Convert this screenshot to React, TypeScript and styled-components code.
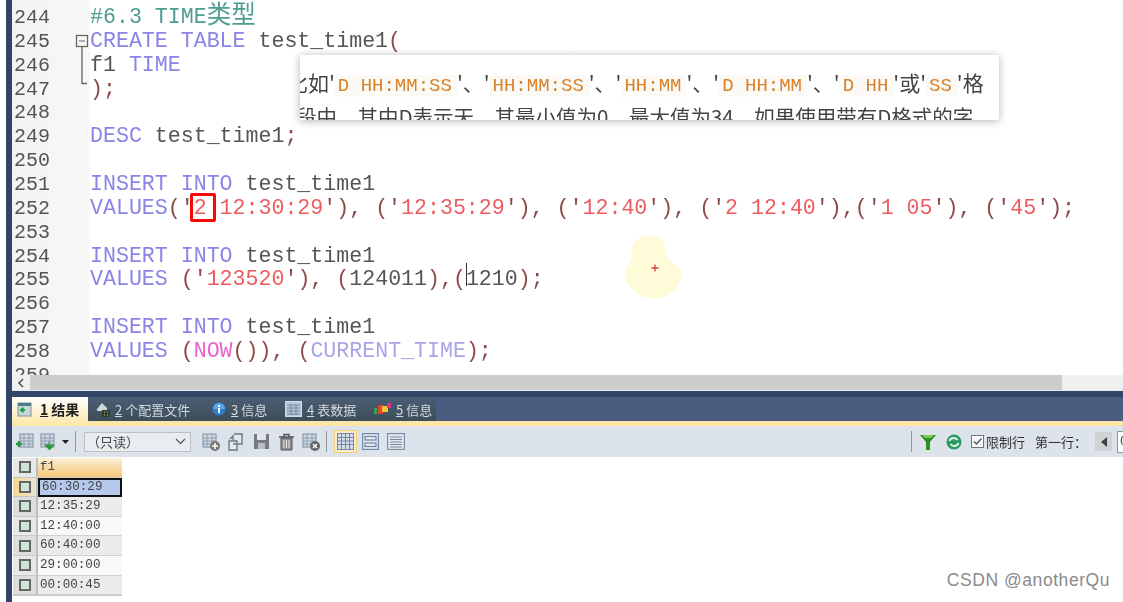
import { ReactNode } from "react";
import styled, { createGlobalStyle } from "styled-components";

const GlobalStyle = createGlobalStyle`
  html, body {
    margin: 0;
    padding: 0;
    background: #fff;
  }
`;

const Page = styled.div`
  position: relative;
  width: 1123px;
  height: 602px;
  overflow: hidden;
  background: #fff;
`;

const Screen = styled.div`
  display: flex;
  height: 100%;
  padding-left: 6px;
  box-sizing: border-box;
  filter: blur(0.45px);
`;

const Rail = styled.div`
  flex: 0 0 6px;
  background: #2f4468;
`;

const Main = styled.div`
  flex: 1;
  min-width: 0;
  display: flex;
  flex-direction: column;
`;

const Editor = styled.div`
  position: relative;
  flex: 0 0 369px;
  padding-top: 6px;
  display: flex;
  overflow: hidden;
  background: #fff;
`;

const Gutter = styled.div`
  flex: 0 0 78px;
  display: flex;
  margin-top: -6px;
  padding-top: 6px;
  background: linear-gradient(90deg, #f3f3f3, #f8f8f8);
`;

const LineNumbers = styled.div`
  flex: 0 0 61px;
  padding-left: 2px;
  font: 20px/23.86px "Liberation Mono", monospace;
  color: #555;
`;

const FoldColumn = styled.div`
  padding-top: 28px;
  svg {
    display: block;
  }
`;

const Code = styled.pre`
  margin: 0;
  font: 21.6px/23.86px "Liberation Mono", "Noto Sans CJK SC", monospace;
  color: #555;
`;

const Kw = styled.span`
  color: #8a84e6;
`;
const Cm = styled.span`
  color: #4f9c90;
`;
const CmWide = styled.span`
  font-size: 24.5px;
  line-height: 0;
`;
const Str = styled.span`
  color: #ee5b5f;
`;
const Pn = styled.span`
  color: #8a4a4a;
`;
const Fn = styled.span`
  color: #e664cf;
`;
const Var = styled.span`
  color: #aaa5e8;
`;

const Marked = styled.span`
  position: relative;
  &::after {
    content: "";
    position: absolute;
    left: -4px;
    top: -3px;
    width: 20px;
    height: 23px;
    border: 3px solid #f50a0a;
    border-radius: 2px;
  }
`;

const Caret = styled.span`
  position: relative;
  &::after {
    content: "";
    position: absolute;
    left: 0;
    top: -4px;
    height: 23px;
    border-left: 1px solid #333;
  }
`;

const Tip = styled.div`
  position: absolute;
  left: 288px;
  top: 55px;
  width: 699px;
  height: 65px;
  overflow: hidden;
  background: #fff;
  box-shadow: 0 1px 8px rgba(0, 0, 0, 0.3);
  font: 21px/34px "Noto Sans CJK SC", sans-serif;
  color: #444;
`;

const TipFragment = styled.div`
  white-space: nowrap;
  margin: -27px 0 3px 0;
  font-size: 20px;
`;

const TipLine = styled.div<{ $shift: number; $size: number }>`
  white-space: nowrap;
  margin-left: ${(p) => p.$shift}px;
  font-size: ${(p) => p.$size}px;
`;

const Mark = styled.span`
  padding: 0 5px 0 3px;
  font: 19px "Liberation Mono", monospace;
  color: #d9822b;
  background: #fbfaf6;
`;

const CursorGlow = styled.svg`
  position: absolute;
  left: 608px;
  top: 233px;
`;

const ScrollBar = styled.div`
  flex: 0 0 15px;
  display: flex;
  border-bottom: 1px solid #e6e8f0;
`;

const ScrollArrow = styled.div`
  flex: 0 0 18px;
  background: #f0f0f0;
  display: flex;
  align-items: center;
  justify-content: center;
`;

const ScrollThumb = styled.div`
  flex: 0 0 1032px;
  background: #cdcdcd;
`;

const ScrollTrack = styled.div`
  flex: 1;
  background: #f0f0f0;
`;

const NavyStrip = styled.div`
  flex: 0 0 6px;
  background: #324768;
`;

const TabBar = styled.div`
  flex: 0 0 24px;
  display: flex;
  align-items: stretch;
  background: #4a5d80;
  border-bottom: 5px solid #fde6a6;
  box-sizing: content-box;
`;

const TabStrip = styled.div`
  display: flex;
  height: 24px;
  background: linear-gradient(180deg, #4c5c74, #3c4e58);
`;

const Tab = styled.div<{ $active?: boolean; $width: number }>`
  display: flex;
  align-items: center;
  width: ${(p) => p.$width}px;
  height: ${(p) => (p.$active ? 29 : 24)}px;
  padding-left: ${(p) => (p.$active ? 5 : 8)}px;
  padding-bottom: ${(p) => (p.$active ? 5 : 0)}px;
  box-sizing: border-box;
  gap: ${(p) => (p.$active ? 8 : 5)}px;
  font: ${(p) => (p.$active ? "700 14px" : "400 13px")} "Noto Sans CJK SC", sans-serif;
  color: ${(p) => (p.$active ? "#222" : "#d4dae0")};
  background: ${(p) =>
    p.$active ? "linear-gradient(180deg, #fff, #fde6a6)" : "transparent"};
  white-space: nowrap;
  u {
    margin-right: 3px;
  }
`;

const Toolbar = styled.div`
  flex: 0 0 31px;
  display: flex;
  align-items: center;
  padding: 0 0 0 4px;
  background: #dce3ea;
  overflow: hidden;
`;

const ToolIcon = styled.div<{ $gap?: number; $active?: boolean }>`
  display: flex;
  align-items: center;
  justify-content: center;
  margin-left: ${(p) => p.$gap ?? 0}px;
  ${(p) =>
    p.$active
      ? "padding: 2px; border: 1px solid #f2cf7c; background: #fdeecb;"
      : ""}
`;

const Separator = styled.div<{ $gap: number }>`
  width: 1px;
  height: 21px;
  margin-left: ${(p) => p.$gap}px;
  background: #8d99a2;
`;

const SelectBox = styled.div`
  width: 107px;
  height: 20px;
  margin-left: 8px;
  padding: 0 4px 0 2px;
  box-sizing: border-box;
  display: flex;
  align-items: center;
  justify-content: space-between;
  background: #e9edef;
  border: 1px solid #b9c0c6;
  font: 13px "Noto Sans CJK SC", sans-serif;
  color: #444;
`;

const Spacer = styled.div`
  flex: 1;
`;

const LimitLabel = styled.span`
  margin-left: 2px;
  font: 13px "Noto Sans CJK SC", sans-serif;
  color: #333;
`;

const FirstRowLabel = styled(LimitLabel)`
  margin-left: 10px;
`;

const PrevButton = styled.div`
  width: 17px;
  height: 19px;
  margin-left: 8px;
  background: #cfd3d6;
  display: flex;
  align-items: center;
  justify-content: center;
`;

const RowInput = styled.div`
  flex: 0 0 3px;
  height: 20px;
  margin-left: 5px;
  padding-left: 2px;
  overflow: hidden;
  background: #fff;
  border-left: 1px solid #8d99a2;
  border-top: 1px solid #8d99a2;
  border-bottom: 1px solid #8d99a2;
  font: 12px/20px "Liberation Mono", monospace;
  color: #333;
`;

const ResultArea = styled.div`
  flex: 1;
  padding: 1px 0 0 1px;
  background: #fff;
`;

const ResultTable = styled.div`
  width: 109px;
  display: grid;
  grid-template-columns: 25px 84px;
  grid-auto-rows: 19.6px;
  border-bottom: 1px solid #c8c8c8;
`;

const RowHead = styled.div<{ $current?: boolean; $alt?: boolean }>`
  display: flex;
  align-items: center;
  justify-content: center;
  background: ${(p) =>
    p.$current
      ? "linear-gradient(90deg, #fbd88e, #e8e4d4)"
      : p.$alt
      ? "#dedede"
      : "#e8e8e8"};
  border-right: 2px solid #bdbdbd;
  border-bottom: 1px solid #c8c8c8;
  box-sizing: border-box;
`;

const Tick = styled.div`
  width: 12px;
  height: 12px;
  box-sizing: border-box;
  border: 2px solid #666;
  background: #cfe6d6;
`;

const Cell = styled.div<{ $kind?: "head" | "selected" | "alt" }>`
  padding-left: 2px;
  box-sizing: border-box;
  font: 12.6px/18px "Liberation Mono", monospace;
  color: #444;
  background: ${(p) =>
    p.$kind === "head"
      ? "linear-gradient(180deg, #fbf0d6, #f6c778)"
      : p.$kind === "selected"
      ? "#b5c9ed"
      : p.$kind === "alt"
      ? "#ebebeb"
      : "#f8f8f8"};
  border: ${(p) => (p.$kind === "selected" ? "2px solid #111" : "0")};
  border-bottom: ${(p) =>
    p.$kind === "selected" ? "2px solid #111" : "1px solid #d0d0d0"};
  line-height: ${(p) => (p.$kind === "selected" ? "15.6px" : "19px")};
`;

const Watermark = styled.div`
  position: absolute;
  right: 13px;
  bottom: 11px;
  font: 17.5px "Liberation Sans", sans-serif;
  letter-spacing: 0.55px;
  color: #8a8a8a;
`;

const lineNumbers = Array.from({ length: 16 }, (_, i) => 244 + i);

const insertInto = (
  <>
    <Kw>INSERT</Kw> <Kw>INTO</Kw> test_time1
  </>
);

const S = ({ children }: { children: ReactNode }) => (
  <>
    <Pn>('</Pn>
    <Str>{children}</Str>
    <Pn>')</Pn>
  </>
);

const codeLines: ReactNode[] = [
  <Cm>
    #6.3 TIME<CmWide>类型</CmWide>
  </Cm>,
  <>
    <Kw>CREATE</Kw> <Kw>TABLE</Kw> test_time1<Pn>(</Pn>
  </>,
  <>
    f1 <Kw>TIME</Kw>
  </>,
  <Pn>);</Pn>,
  "",
  <>
    <Kw>DESC</Kw> test_time1<Pn>;</Pn>
  </>,
  "",
  insertInto,
  <>
    <Kw>VALUES</Kw>
    <Pn>('</Pn>
    <Str>
      <Marked>2</Marked> 12:30:29
    </Str>
    <Pn>'),</Pn> <S>12:35:29</S>
    <Pn>,</Pn> <S>12:40</S>
    <Pn>,</Pn> <S>2 12:40</S>
    <Pn>,</Pn>
    <S>1 05</S>
    <Pn>,</Pn> <S>45</S>
    <Pn>;</Pn>
  </>,
  "",
  insertInto,
  <>
    <Kw>VALUES</Kw> <S>123520</S>
    <Pn>,</Pn> <Pn>(</Pn>124011<Pn>),(</Pn>
    <Caret />
    1210<Pn>);</Pn>
  </>,
  "",
  insertInto,
  <>
    <Kw>VALUES</Kw> <Pn>(</Pn>
    <Fn>NOW</Fn>
    <Pn>()),</Pn> <Pn>(</Pn>
    <Var>CURRENT_TIME</Var>
    <Pn>);</Pn>
  </>,
  "",
];

const rows = ["60:30:29", "12:35:29", "12:40:00", "60:40:00", "29:00:00", "00:00:45"];

const Sheet = ({ x = 0 }: { x?: number }) => (
  <>
    <rect x={x + 1} y="1" width="13" height="13" fill="#cfd9e4" stroke="#7f8c99" />
    <path
      d={`M${x + 1} 5h13M${x + 1} 8h13M${x + 1} 11h13M${x + 5} 1v13M${x + 10} 1v13`}
      stroke="#8fa0b2"
      fill="none"
    />
  </>
);

const GridAdd = () => (
  <svg width="18" height="18" viewBox="0 0 18 18">
    <Sheet x={3} />
    <path d="M0 11h6M3 8v6" stroke="#2b9a3c" strokeWidth="2.4" />
  </svg>
);

const GridDown = () => (
  <svg width="18" height="18" viewBox="0 0 18 18">
    <Sheet />
    <path d="M9 8v5M5 12h9l-4.500 5z" fill="#2b9a3c" stroke="#2b9a3c" />
  </svg>
);

const GridPlus = () => (
  <svg width="18" height="18" viewBox="0 0 18 18">
    <Sheet />
    <circle cx="13" cy="13" r="5" fill="#777" />
    <path d="M10 13h6M13 10v6" stroke="#fff" strokeWidth="1.600" />
  </svg>
);

const Copies = () => (
  <svg width="18" height="18" viewBox="0 0 18 18" fill="none" stroke="#6d7780" strokeWidth="1.400">
    <path d="M7 1h8v10H11M2 8h8v9H2z" fill="#e4e9ee" />
    <path d="M6 7V3l-3 3M6 11h4" />
  </svg>
);

const Floppy = () => (
  <svg width="17" height="17" viewBox="0 0 17 17">
    <path d="M1 1h15v15H1z" fill="#757b80" />
    <path d="M4 1h9v6H4z" fill="#dfe4e8" />
    <path d="M5 10h7v6H5z" fill="#b9bfc4" />
  </svg>
);

const Bin = () => (
  <svg width="17" height="18" viewBox="0 0 17 18" fill="none" stroke="#555">
    <path d="M1 4h15M6 4V1.500h5V4" strokeWidth="1.500" />
    <path d="M3 5h11v12H3z" fill="#8b8f92" strokeWidth="1" />
    <path d="M6 7v8M8.500 7v8M11 7v8" stroke="#e8e8e8" />
  </svg>
);

const GridCross = () => (
  <svg width="18" height="18" viewBox="0 0 18 18">
    <Sheet />
    <circle cx="13" cy="13" r="5" fill="#666" />
    <path d="M11 11l4 4M15 11l-4 4" stroke="#fff" strokeWidth="1.500" />
  </svg>
);

const ViewGrid = () => (
  <svg width="17" height="17" viewBox="0 0 17 17" fill="none" stroke="#6f87a8">
    <rect x="0.500" y="0.500" width="16" height="16" fill="#d8e0ec" />
    <path d="M1 4.500h15M1 8h15M1 11.500h15M4.500 1v15M8.500 1v15M12.500 1v15" />
  </svg>
);

const ViewForm = () => (
  <svg width="17" height="17" viewBox="0 0 17 17" fill="none" stroke="#6f87a8" strokeWidth="1.200">
    <rect x="0.600" y="0.600" width="15.800" height="15.800" fill="#e4e9ef" />
    <rect x="3" y="3.500" width="11" height="3.500" />
    <rect x="3" y="10" width="11" height="3.500" />
  </svg>
);

const ViewText = () => (
  <svg width="18" height="17" viewBox="0 0 18 17" fill="none" stroke="#75899f" strokeWidth="1.100">
    <rect x="0.600" y="0.600" width="16.800" height="15.800" fill="#e4e9ef" />
    <path d="M3 4h12M3 6.500h12M3 9h12M3 11.500h12M3 14h12" />
  </svg>
);

const Funnel = () => (
  <svg width="16" height="16" viewBox="0 0 16 16">
    <path d="M0 1h16L10 8v8H6V8z" fill="#2f8f1f" />
    <path d="M2 1h12l-3 3H5z" fill="#7fc95a" />
  </svg>
);

const Refresh = () => (
  <svg width="16" height="16" viewBox="0 0 16 16" fill="none">
    <circle cx="8" cy="8" r="7.500" fill="#2c9a63" />
    <path d="M3.500 7c1-3.500 6-4 8-1M12.500 9c-1 3.500-6 4-8 1" stroke="#dff3e6" strokeWidth="2" />
  </svg>
);

const CheckedBox = () => (
  <svg width="13" height="13" viewBox="0 0 13 13" fill="none">
    <rect x="0.500" y="0.500" width="12" height="12" fill="#f6f7f8" stroke="#6d7780" />
    <path d="M3 6.500l2.500 2.500 5-5.500" stroke="#555" strokeWidth="1.300" />
  </svg>
);

const ResultIcon = () => (
  <svg width="15" height="16" viewBox="0 0 15 16">
    <rect x="1" y="2" width="13" height="13" fill="#c8d6d8" stroke="#7d8f95" />
    <rect x="1" y="2" width="13" height="3" fill="#4f7b8c" />
    <path d="M3 9h5M5.500 6.500v5" stroke="#1f9d3a" strokeWidth="2.200" />
  </svg>
);

const ProfileIcon = () => (
  <svg width="14" height="16" viewBox="0 0 14 16">
    <path d="M1 8l5-6 5 5v3H1z" fill="#cfd6da" />
    <rect x="6" y="9" width="8" height="7" fill="#2e3d2c" />
    <path d="M8 11h1M11 11h1M8 14h1M11 14h1" stroke="#c7c98f" />
  </svg>
);

const InfoIcon = () => (
  <svg width="14" height="14" viewBox="0 0 14 14">
    <circle cx="7" cy="7" r="6.500" fill="#2e7fd0" />
    <path d="M1 7a6 6 0 0 1 12 0z" fill="#5aa8ec" />
    <rect x="6" y="3" width="2" height="2" fill="#fff" />
    <rect x="6" y="6" width="2" height="5" fill="#fff" />
  </svg>
);

const TableIcon = () => (
  <svg width="17" height="16" viewBox="0 0 17 16" fill="none" stroke="#70849c">
    <rect x="0.500" y="0.500" width="16" height="15" fill="#b9c9da" stroke="#d2dce6" />
    <path d="M2 4h13M2 7h13M2 10h13M2 13h13M6 4v10M11 4v10" />
  </svg>
);

const BlocksIcon = () => (
  <svg width="17" height="14" viewBox="0 0 17 14">
    <rect x="0" y="6" width="3" height="6" fill="#3aa655" />
    <rect x="4" y="3" width="5" height="9" fill="#e0453a" />
    <rect x="8" y="4" width="6" height="6" fill="#f4c430" />
    <rect x="13" y="1" width="4" height="5" fill="#d8368a" />
  </svg>
);

const tabs = [
  { n: "1", label: "结果", width: 76, icon: <ResultIcon />, active: true },
  { n: "2", label: "个配置文件", width: 116, icon: <ProfileIcon /> },
  { n: "3", label: "信息", width: 73, icon: <InfoIcon /> },
  { n: "4", label: "表数据", width: 89, icon: <TableIcon /> },
  { n: "5", label: "信息", width: 70, icon: <BlocksIcon /> },
];

export default function App() {
  return (
    <Page>
      <GlobalStyle />
      <Screen>
        <Rail />
        <Main>
          <Editor>
            <Gutter>
              <LineNumbers>
                {lineNumbers.map((n) => (
                  <div key={n}>{n}</div>
                ))}
              </LineNumbers>
              <FoldColumn>
                <svg width="14" height="56" viewBox="0 0 14 56" fill="none" stroke="#666">
                  <rect x="1.500" y="1.500" width="11" height="11" strokeWidth="1.300" />
                  <path d="M4 7h6" />
                  <path d="M7 13v36.500h5" strokeWidth="1.300" />
                </svg>
              </FoldColumn>
            </Gutter>
            <Code>
              {codeLines.map((line, i) => (
                <div key={i}>{line === "" ? " " : line}</div>
              ))}
            </Code>
            <Tip>
              <TipFragment>向TIME类型的字段插入数据时，也可以使用几种不同的格式。</TipFragment>
              <TipLine $shift={-13} $size={21}>
                比如'<Mark>D HH:MM:SS</Mark>'、'<Mark>HH:MM:SS</Mark>'、'<Mark>HH:MM</Mark>'、'
                <Mark>D HH:MM</Mark>'、'<Mark>D HH</Mark>'或'<Mark>SS</Mark>'格
              </TipLine>
              <TipLine $shift={-4} $size={20.5}>
                段中，其中D表示天，其最小值为0，最大值为34，如果使用带有D格式的字
              </TipLine>
            </Tip>
            <CursorGlow width="74" height="72" viewBox="0 0 74 72">
              <path
                d="M16 8c8-7 24-7 28 2 2 6 2 14 8 20 7 2 10 8 9 13-2 10-9 19-20 22-9 2-20 0-27-8C7 52 2 44 6 36c3-5 6-8 6-14 0-6 0-10 4-14z"
                fill="#fdfbd8"
              />
              <path d="M35 31.500v7M31.500 35h7" stroke="#d84040" strokeWidth="1.300" />
            </CursorGlow>
          </Editor>
          <ScrollBar>
            <ScrollArrow>
              <svg width="8" height="10" viewBox="0 0 8 10" fill="none" stroke="#555" strokeWidth="1.600">
                <path d="M6 1L2 5l4 4" />
              </svg>
            </ScrollArrow>
            <ScrollThumb />
            <ScrollTrack />
          </ScrollBar>
          <NavyStrip />
          <TabBar>
            <TabStrip>
              {tabs.map((t) => (
                <Tab key={t.n} $active={t.active} $width={t.width}>
                  {t.icon}
                  <span>
                    <u>{t.n}</u>
                    {t.label}
                  </span>
                </Tab>
              ))}
            </TabStrip>
          </TabBar>
          <Toolbar>
            <ToolIcon>
              <GridAdd />
            </ToolIcon>
            <ToolIcon $gap={6}>
              <GridDown />
            </ToolIcon>
            <ToolIcon $gap={4}>
              <svg width="7" height="4" viewBox="0 0 7 4">
                <path d="M0 0h7L3.500 4z" fill="#222" />
              </svg>
            </ToolIcon>
            <Separator $gap={6} />
            <SelectBox>
              （只读）
              <svg width="11" height="7" viewBox="0 0 11 7" fill="none" stroke="#555" strokeWidth="1.200">
                <path d="M1 1l4.500 4.500L10 1" />
              </svg>
            </SelectBox>
            <ToolIcon $gap={11}>
              <GridPlus />
            </ToolIcon>
            <ToolIcon $gap={7}>
              <Copies />
            </ToolIcon>
            <ToolIcon $gap={8}>
              <Floppy />
            </ToolIcon>
            <ToolIcon $gap={8}>
              <Bin />
            </ToolIcon>
            <ToolIcon $gap={7}>
              <GridCross />
            </ToolIcon>
            <Separator $gap={6} />
            <ToolIcon $gap={7} $active>
              <ViewGrid />
            </ToolIcon>
            <ToolIcon $gap={5}>
              <ViewForm />
            </ToolIcon>
            <ToolIcon $gap={8}>
              <ViewText />
            </ToolIcon>
            <Spacer />
            <Separator $gap={0} />
            <ToolIcon $gap={8}>
              <Funnel />
            </ToolIcon>
            <ToolIcon $gap={10}>
              <Refresh />
            </ToolIcon>
            <ToolIcon $gap={9}>
              <CheckedBox />
            </ToolIcon>
            <LimitLabel>限制行</LimitLabel>
            <FirstRowLabel>第一行：</FirstRowLabel>
            <PrevButton>
              <svg width="6" height="10" viewBox="0 0 6 10">
                <path d="M6 0v10L0 5z" fill="#444" />
              </svg>
            </PrevButton>
            <RowInput>0</RowInput>
          </Toolbar>
          <ResultArea>
            <ResultTable>
              <RowHead>
                <Tick />
              </RowHead>
              <Cell $kind="head">f1</Cell>
              {rows.map((r, i) => (
                <RowContent key={r} value={r} index={i} />
              ))}
            </ResultTable>
          </ResultArea>
        </Main>
      </Screen>
      <Watermark>CSDN @anotherQu</Watermark>
    </Page>
  );
}

function RowContent({ value, index }: { value: string; index: number }) {
  const kind = index === 0 ? "selected" : index % 2 === 1 ? "alt" : undefined;
  return (
    <>
      <RowHead $current={index === 0} $alt={index % 2 === 1}>
        <Tick />
      </RowHead>
      <Cell $kind={kind}>{value}</Cell>
    </>
  );
}
